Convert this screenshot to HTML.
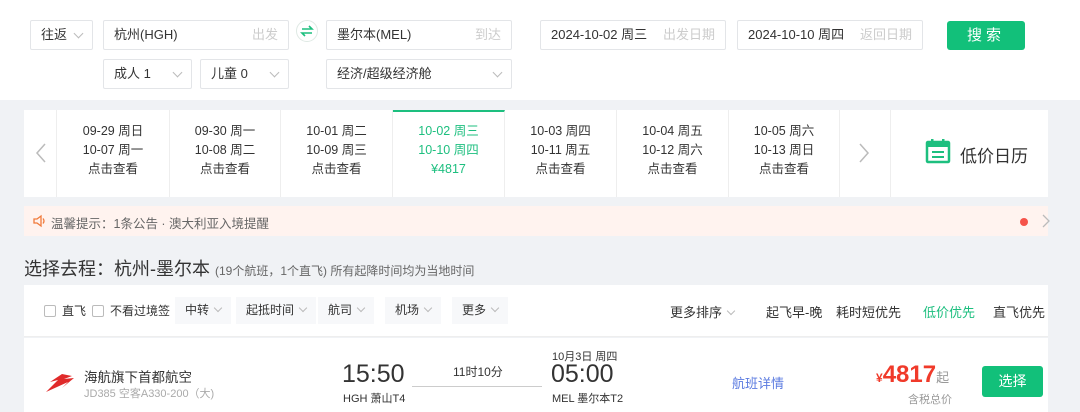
<!DOCTYPE html>
<html><head><meta charset="utf-8"><style>
*{box-sizing:border-box;margin:0;padding:0}
body{width:1080px;height:412px;overflow:hidden;background:#f0f2f5;font-family:"Liberation Sans","Noto Sans CJK SC",sans-serif;color:#333;font-size:13px;position:relative}
.a{position:absolute}
.box{position:absolute;background:#fff;border:1px solid #e3e5e8;border-radius:2px;height:30px;line-height:28px;padding-left:10px;font-size:13px;color:#333}
.ph{position:absolute;right:10px;top:0;color:#ccc}
.chev{position:absolute;right:10px;top:9px;width:7px;height:7px;border-right:1px solid #bbb;border-bottom:1px solid #bbb;transform:rotate(45deg)}
.cell{position:absolute;top:110px;height:87px;background:#fff;border-right:1px solid #eee;text-align:center;font-size:12.5px;line-height:19px;padding-top:12px;color:#333}
.cb{display:inline-block;width:12px;height:12px;border:1px solid #bbb;border-radius:2px;vertical-align:-2px;margin-right:6px;background:#fff}
.flt{position:absolute;top:297px;height:27px;line-height:27px;background:#f7f8fa;font-size:12px;padding:0 10px;color:#333}
.sc{display:inline-block;width:6px;height:6px;border-right:1px solid #bbb;border-bottom:1px solid #bbb;transform:rotate(45deg);margin-left:6px;vertical-align:3px}
</style></head><body>
<div class="a" style="left:0;top:0;width:1080px;height:100px;background:#fff"></div>
<div class="box" style="left:30px;top:20px;width:63px">往返<span class="chev"></span></div>
<div class="box" style="left:103px;top:20px;width:186px">杭州(HGH)<span class="ph">出发</span></div>
<svg class="a" style="left:296px;top:20px" width="22" height="22" viewBox="0 0 22 22"><circle cx="11" cy="11" r="10.5" fill="#fff" stroke="#dfe9e4"/><path d="M6 9h10l-3-3M16 13H6l3 3" fill="none" stroke="#1dbf7f" stroke-width="1.6"/></svg>
<div class="box" style="left:326px;top:20px;width:186px">墨尔本(MEL)<span class="ph">到达</span></div>
<div class="box" style="left:540px;top:20px;width:186px">2024-10-02 周三<span class="ph">出发日期</span></div>
<div class="box" style="left:737px;top:20px;width:186px">2024-10-10 周四<span class="ph">返回日期</span></div>
<div class="a" style="left:947px;top:21px;width:78px;height:29px;background:#12c07a;border-radius:3px;color:#fff;text-align:center;line-height:29px;font-size:15px;letter-spacing:4px">搜索</div>
<div class="box" style="left:103px;top:59px;width:89px">成人 1<span class="chev"></span></div>
<div class="box" style="left:200px;top:59px;width:89px">儿童 0<span class="chev"></span></div>
<div class="box" style="left:326px;top:59px;width:186px">经济/超级经济舱<span class="chev"></span></div>

<div class="a" style="left:24px;top:110px;width:1024px;height:87px;background:#fff"></div>
<svg class="a" style="left:34px;top:142px" width="14" height="22" viewBox="0 0 14 22"><path d="M11 2L3 11l8 9" fill="none" stroke="#bbb" stroke-width="1.5"/></svg>
<div class="cell" style="left:56px;width:114px;border-left:1px solid #eee">09-29 周日<br>10-07 周一<br>点击查看</div>
<div class="cell" style="left:170px;width:111px">09-30 周一<br>10-08 周二<br>点击查看</div>
<div class="cell" style="left:281px;width:112px">10-01 周二<br>10-09 周三<br>点击查看</div>
<div class="cell" style="left:393px;width:112px;border-top:2px solid #1dbf7f;padding-top:10px;color:#1dbf7f">10-02 周三<br>10-10 周四<br>¥4817</div>
<div class="cell" style="left:505px;width:112px">10-03 周四<br>10-11 周五<br>点击查看</div>
<div class="cell" style="left:617px;width:112px">10-04 周五<br>10-12 周六<br>点击查看</div>
<div class="cell" style="left:729px;width:111px">10-05 周六<br>10-13 周日<br>点击查看</div>
<svg class="a" style="left:857px;top:142px" width="14" height="22" viewBox="0 0 14 22"><path d="M3 2l8 9-8 9" fill="none" stroke="#bbb" stroke-width="1.5"/></svg>
<div class="a" style="left:890px;top:110px;width:1px;height:87px;background:#eee"></div>
<svg class="a" style="left:925px;top:138px" width="26" height="26" viewBox="0 0 26 26"><rect x="2" y="4" width="22" height="20" rx="1" fill="none" stroke="#1dbf7f" stroke-width="2.5"/><rect x="2" y="4" width="22" height="5" fill="#1dbf7f"/><rect x="6" y="1" width="2.5" height="5" fill="#1dbf7f"/><rect x="17" y="1" width="2.5" height="5" fill="#1dbf7f"/><rect x="7" y="13" width="12" height="2" fill="#1dbf7f"/><rect x="7" y="18" width="12" height="2" fill="#1dbf7f"/></svg>
<div class="a" style="left:960px;top:142px;font-size:17px;color:#333">低价日历</div>

<div class="a" style="left:24px;top:206px;width:1024px;height:30px;background:#fff3ef"></div>
<svg class="a" style="left:33px;top:214px" width="14" height="14" viewBox="0 0 14 14"><path d="M1 5h3l4-3v10l-4-3H1z" fill="none" stroke="#f07a3a" stroke-width="1.3"/><path d="M10 4.5q2 2.5 0 5" fill="none" stroke="#f07a3a" stroke-width="1.3"/></svg>
<div class="a" style="left:51px;top:213px;font-size:12.5px;color:#666">温馨提示：1条公告 · 澳大利亚入境提醒</div>
<div class="a" style="left:1020px;top:218px;width:8px;height:8px;border-radius:50%;background:#f5534a"></div>
<svg class="a" style="left:1041px;top:213px" width="10" height="16" viewBox="0 0 10 16"><path d="M2 2l6 6-6 6" fill="none" stroke="#bbb" stroke-width="1.3"/></svg>

<div class="a" style="left:24px;top:255px;font-size:18px;color:#333">选择去程：杭州-墨尔本 <span style="font-size:12px;color:#666">(19个航班，1个直飞) 所有起降时间均为当地时间</span></div>

<div class="a" style="left:24px;top:285px;width:1024px;height:52px;background:#fff;border-bottom:1px solid #eee"></div>
<div class="a" style="left:44px;top:302px;font-size:12px"><span class="cb"></span>直飞</div>
<div class="a" style="left:92px;top:302px;font-size:12px"><span class="cb"></span>不看过境签</div>
<div class="flt" style="left:175px">中转<span class="sc"></span></div>
<div class="flt" style="left:236px">起抵时间<span class="sc"></span></div>
<div class="flt" style="left:318px">航司<span class="sc"></span></div>
<div class="flt" style="left:385px">机场<span class="sc"></span></div>
<div class="flt" style="left:452px">更多<span class="sc"></span></div>
<div class="a" style="left:670px;top:302px;font-size:13px;color:#333">更多排序<span class="sc"></span></div>
<div class="a" style="left:766px;top:302px;font-size:13px">起飞早-晚</div>
<div class="a" style="left:836px;top:302px;font-size:13px">耗时短优先</div>
<div class="a" style="left:923px;top:302px;font-size:13px;color:#1dbf7f">低价优先</div>
<div class="a" style="left:993px;top:302px;font-size:13px">直飞优先</div>

<div class="a" style="left:24px;top:338px;width:1024px;height:74px;background:#fff"></div>
<svg class="a" style="left:44px;top:370px" width="32" height="24" viewBox="0 0 32 24"><path d="M2 22 L14 10 L6 12 L18 4 L28 6 L20 9 L30 8 L18 18 L24 12 Z" fill="#e02a2a"/></svg>
<div class="a" style="left:84px;top:366px;font-size:13.5px">海航旗下首都航空</div>
<div class="a" style="left:84px;top:385px;font-size:11px;color:#aaa">JD385 空客A330-200（大)</div>
<div class="a" style="left:342px;top:360px;font-size:25px;color:#333">15:50</div>
<div class="a" style="left:343px;top:390px;font-size:11px">HGH 萧山T4</div>
<div class="a" style="left:453px;top:363px;font-size:12px">11时10分</div>
<div class="a" style="left:412px;top:386px;width:130px;height:1px;background:#ccc"></div>
<div class="a" style="left:552px;top:348px;font-size:11px">10月3日 周四</div>
<div class="a" style="left:551px;top:360px;font-size:25px">05:00</div>
<div class="a" style="left:552px;top:390px;font-size:11px">MEL 墨尔本T2</div>
<div class="a" style="left:732px;top:373px;font-size:13px;color:#5b7be0">航班详情</div>
<div class="a" style="left:876px;top:361px;color:#f03a2a;font-weight:bold"><span style="font-size:12px">¥</span><span style="font-size:24px">4817</span><span style="font-size:13px;color:#999;font-weight:normal">起</span></div>
<div class="a" style="left:908px;top:391px;font-size:11px;color:#999">含税总价</div>
<div class="a" style="left:982px;top:366px;width:61px;height:31px;background:#12c07a;border-radius:3px;color:#fff;text-align:center;line-height:31px;font-size:14px">选择</div>
</body></html>
